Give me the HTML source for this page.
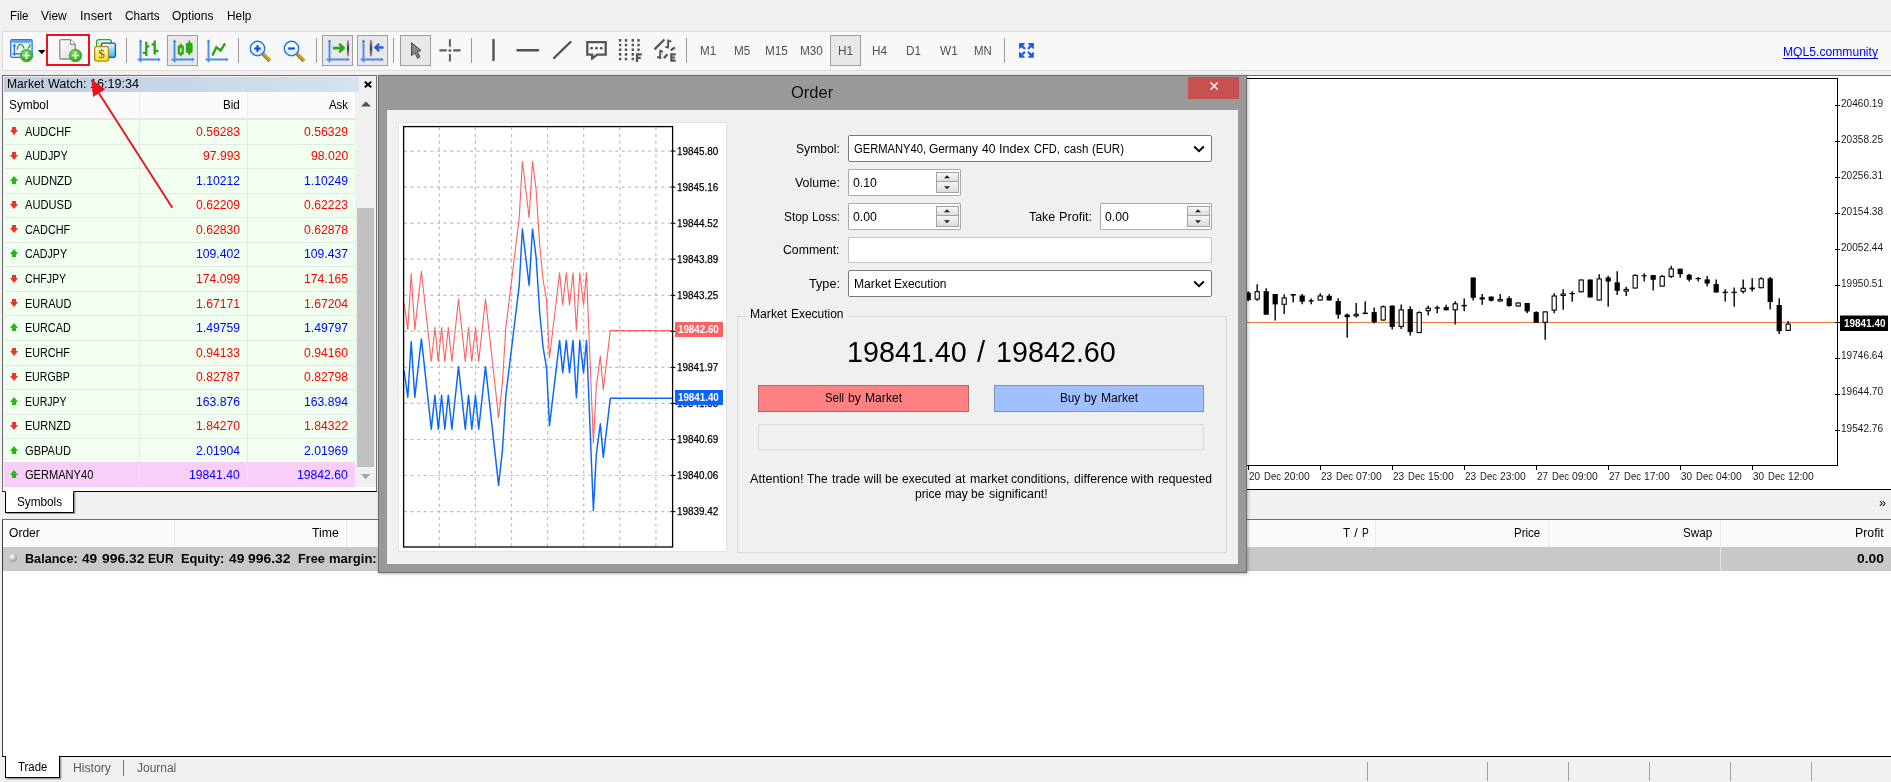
<!DOCTYPE html><html><head><meta charset="utf-8"><title>Order</title><style>
html,body{margin:0;padding:0}body{width:1891px;height:782px;overflow:hidden;position:relative;background:#f0f0f0;font-family:"Liberation Sans", sans-serif;font-size:12.5px;color:#000}
div{box-sizing:border-box}svg{position:absolute;overflow:visible}
</style></head><body><div id="root" style="position:absolute;left:0;top:0;width:1891px;height:782px;will-change:transform">
<div style="position:absolute;top:5.800000000000001px;line-height:20px;font-size:12.5px;color:#000;white-space:pre;transform-origin:0 50%;left:10.00px;transform:scaleX(0.9190);">File</div>
<div style="position:absolute;top:5.800000000000001px;line-height:20px;font-size:12.5px;color:#000;white-space:pre;transform-origin:0 50%;left:41.00px;transform:scaleX(0.9586);">View</div>
<div style="position:absolute;top:5.800000000000001px;line-height:20px;font-size:12.5px;color:#000;white-space:pre;transform-origin:0 50%;left:80.00px;transform:scaleX(1.0218);">Insert</div>
<div style="position:absolute;top:5.800000000000001px;line-height:20px;font-size:12.5px;color:#000;white-space:pre;transform-origin:0 50%;left:125.00px;transform:scaleX(0.9434);">Charts</div>
<div style="position:absolute;top:5.800000000000001px;line-height:20px;font-size:12.5px;color:#000;white-space:pre;transform-origin:0 50%;left:172.00px;transform:scaleX(0.9625);">Options</div>
<div style="position:absolute;top:5.800000000000001px;line-height:20px;font-size:12.5px;color:#000;white-space:pre;transform-origin:0 50%;left:227.00px;transform:scaleX(0.9487);">Help</div>
<div style="position:absolute;left:2px;top:31px;width:1889px;height:40px;background:#f8f8f8;border:1px solid #dcdcdc;border-right:none"></div>
<div style="position:absolute;left:126px;top:38.2px;width:1.2px;height:24.6px;background:#989898"></div>
<div style="position:absolute;left:238px;top:38.2px;width:1.2px;height:24.6px;background:#989898"></div>
<div style="position:absolute;left:316px;top:38.2px;width:1.2px;height:24.6px;background:#989898"></div>
<div style="position:absolute;left:393px;top:38.2px;width:1.2px;height:24.6px;background:#989898"></div>
<div style="position:absolute;left:471px;top:38.2px;width:1.2px;height:24.6px;background:#989898"></div>
<div style="position:absolute;left:686px;top:38.2px;width:1.2px;height:24.6px;background:#989898"></div>
<div style="position:absolute;left:1004px;top:38.2px;width:1.2px;height:24.6px;background:#989898"></div>
<div style="position:absolute;left:167px;top:35px;width:30.7px;height:30.7px;background:#e8e8e8;border:1.3px solid #9e9e9e"></div>
<div style="position:absolute;left:322px;top:35px;width:30.7px;height:30.7px;background:#e8e8e8;border:1.3px solid #9e9e9e"></div>
<div style="position:absolute;left:357px;top:35px;width:30.7px;height:30.7px;background:#e8e8e8;border:1.3px solid #9e9e9e"></div>
<div style="position:absolute;left:400px;top:35px;width:30.7px;height:30.7px;background:#e8e8e8;border:1.3px solid #9e9e9e"></div>
<div style="position:absolute;left:830px;top:35px;width:30.7px;height:30.7px;background:#e8e8e8;border:1.3px solid #9e9e9e"></div>
<div style="position:absolute;left:46px;top:34px;width:44px;height:32px;border:2px solid #e81224"></div>
<svg width="0" height="0" style="left:0;top:0"><defs><radialGradient id="gp" cx="0.4" cy="0.3" r="0.8"><stop offset="0" stop-color="#7ddc5a"/><stop offset="1" stop-color="#2c9a1c"/></radialGradient><linearGradient id="pg" x1="0" y1="0" x2="1" y2="1"><stop offset="0" stop-color="#ffffff"/><stop offset="1" stop-color="#dadada"/></linearGradient><linearGradient id="gold" x1="0" y1="0" x2="0" y2="1"><stop offset="0" stop-color="#fffbe8"/><stop offset="1" stop-color="#ffe01c"/></linearGradient><linearGradient id="tb" x1="0" y1="0" x2="0" y2="1"><stop offset="0" stop-color="#3f8ee8"/><stop offset="1" stop-color="#8ebaf2"/></linearGradient><linearGradient id="blu" x1="0" y1="0" x2="0" y2="1"><stop offset="0" stop-color="#eef8ff"/><stop offset="1" stop-color="#22c0ff"/></linearGradient><linearGradient id="grn" x1="0" y1="0" x2="0" y2="1"><stop offset="0" stop-color="#eefae4"/><stop offset="1" stop-color="#a4dc84"/></linearGradient><linearGradient id="lens" x1="0" y1="0" x2="0" y2="1"><stop offset="0" stop-color="#ffffff"/><stop offset="1" stop-color="#d8eefa"/></linearGradient><linearGradient id="bar" gradientUnits="userSpaceOnUse" x1="0" y1="4" x2="0" y2="18.5"><stop offset="0" stop-color="#9a9a9a"/><stop offset="0.5" stop-color="#3c3c3c"/><stop offset="1" stop-color="#9a9a9a"/></linearGradient></defs></svg>
<svg style="left:9px;top:38px" width="30" height="28" viewBox="0 0 30 28"><rect x="1.7" y="1.6" width="21.4" height="17.7" rx="1.4" fill="#e9f1fb" stroke="#237be2" stroke-width="1.3"/><rect x="2.3" y="2.2" width="20.2" height="2.9" fill="url(#tb)"/><path d="M5.4 7V17.7M3.4 15.8H12" stroke="#3866d2" stroke-width="1.3" fill="none"/><path d="M3.6 8.2L5.4 5.8L7.2 8.2Z" fill="#3866d2"/><path d="M8.2 11.6C8.8 8 10 6.4 11.6 6.4S14.2 8 14.8 10.4M19.2 10.4C20.2 9.4 20.8 8 21.3 6.3" stroke="#3aa31f" stroke-width="1.4" fill="none"/><circle cx="17.5" cy="17.5" r="6.3" fill="url(#gp)" stroke="#2f9a1f" stroke-width="0.6"/><path d="M13.9 17.5H21.1M17.5 13.9V21.1" stroke="#fff" stroke-width="1.7" fill="none"/></svg>
<svg style="left:38px;top:50px" width="8" height="4.4" viewBox="0 0 8 4.4"><path d="M0 0H7.6L3.8 4.2Z" fill="#000"/></svg>
<svg style="left:58px;top:38px" width="26" height="28" viewBox="0 0 26 28"><path d="M2.8 1.7H12.5L17.2 6.4V20Q17.2 21 16.2 21H2.8Q1.8 21 1.8 20V2.7Q1.8 1.7 2.8 1.7Z" fill="url(#pg)" stroke="#8c8c8c" stroke-width="1.3"/><path d="M12.5 1.7V6.4H17.2" fill="#fff" stroke="#8c8c8c" stroke-width="1.1"/><circle cx="17.5" cy="17.5" r="6.3" fill="url(#gp)" stroke="#2f9a1f" stroke-width="0.6"/><path d="M13.9 17.5H21.1M17.5 13.9V21.1" stroke="#fff" stroke-width="1.7" fill="none"/></svg>
<svg style="left:93px;top:38px" width="26" height="26" viewBox="0 0 26 26"><rect x="3.6" y="1.6" width="14.8" height="14" rx="2.2" fill="url(#grn)" stroke="#27ae1c" stroke-width="1.3"/><rect x="8.4" y="5.1" width="14" height="14.2" rx="2" fill="url(#blu)" stroke="#1448c0" stroke-width="1.3"/><rect x="1.7" y="8.7" width="13.8" height="14.4" rx="1.8" fill="url(#gold)" stroke="#b08a14" stroke-width="1.3"/><text x="8.6" y="20.4" font-size="13.5" text-anchor="middle" fill="#7a5a00" font-family='"Liberation Serif"'>$</text></svg>
<svg style="left:136.9px;top:36.5px" width="26" height="26" viewBox="0 0 26 26"><path d="M3.5 3.5V25.2M0.6 22.5H22" stroke="#4a8bee" stroke-width="1.9" fill="none"/><path d="M1.8 5L3.5 2.6L5.2 5ZM21.2 20.8L23.6 22.5L21.2 24.2Z" fill="#3b7ce8"/><path d="M9.3 4.8V19.1M5.8 15.9H9.3M9.3 9.3H12.4M17.7 3.6V17.6M14.6 7.4H17.7M17.7 14H21.4" stroke="#2aa612" stroke-width="2.3" fill="none"/></svg>
<svg style="left:170.9px;top:36.5px" width="26" height="26" viewBox="0 0 26 26"><path d="M3.5 3.5V25.2M0.6 22.5H22" stroke="#4a8bee" stroke-width="1.9" fill="none"/><path d="M1.8 5L3.5 2.6L5.2 5ZM21.2 20.8L23.6 22.5L21.2 24.2Z" fill="#3b7ce8"/><path d="M9.8 6.8V19.3M18.3 3.5V18" stroke="#2aa612" stroke-width="1.9"/><rect x="6.7" y="8.6" width="6.1" height="9" rx="0.8" fill="#2aa612"/><rect x="8.9" y="10.8" width="1.7" height="4.6" fill="#cfe8c8"/><rect x="14.9" y="5.7" width="6.7" height="10.2" rx="1.6" fill="#2aa612"/></svg>
<svg style="left:205.4px;top:36.5px" width="26" height="26" viewBox="0 0 26 26"><path d="M3.5 3.5V25.2M0.6 22.5H22" stroke="#4a8bee" stroke-width="1.9" fill="none"/><path d="M1.8 5L3.5 2.6L5.2 5ZM21.2 20.8L23.6 22.5L21.2 24.2Z" fill="#3b7ce8"/><path d="M7.3 18.5L11.4 10.3L15.7 13.5L20.1 6.3" stroke="#2aa612" stroke-width="2.5" fill="none"/></svg>
<svg style="left:249.3px;top:39.5px" width="24" height="24" viewBox="0 0 24 24"><path d="M13 13L20.9 20.9" stroke="#a87a10" stroke-width="3.8"/><path d="M13.4 12.6L21.3 20.5" stroke="#d8b030" stroke-width="1.5"/><circle cx="8.5" cy="8.5" r="7.2" fill="url(#lens)" stroke="#1c78e2" stroke-width="1.4"/><path d="M5.2 8.5H11.8" stroke="#1648d8" stroke-width="2.2"/><path d="M8.5 5.2V11.8" stroke="#1648d8" stroke-width="2.2"/></svg>
<svg style="left:283.2px;top:39.5px" width="24" height="24" viewBox="0 0 24 24"><path d="M13 13L20.9 20.9" stroke="#a87a10" stroke-width="3.8"/><path d="M13.4 12.6L21.3 20.5" stroke="#d8b030" stroke-width="1.5"/><circle cx="8.5" cy="8.5" r="7.2" fill="url(#lens)" stroke="#1c78e2" stroke-width="1.4"/><path d="M5.2 8.5H11.8" stroke="#1648d8" stroke-width="2.2"/></svg>
<svg style="left:326px;top:36.5px" width="26" height="26" viewBox="0 0 26 26"><path d="M3.5 3.5V25.2M0.6 22.5H22" stroke="#4a8bee" stroke-width="1.9" fill="none"/><path d="M1.8 5L3.5 2.6L5.2 5ZM21.2 20.8L23.6 22.5L21.2 24.2Z" fill="#3b7ce8"/><path d="M6.8 11.1H17M13.2 6.9L17.6 11.1L13.2 15.3" stroke="#28a814" stroke-width="2.6" fill="none" stroke-linejoin="miter"/><path d="M22 4V18.3" stroke="url(#bar)" stroke-width="2.2" stroke-linecap="round"/></svg>
<svg style="left:360.4px;top:36.5px" width="26" height="26" viewBox="0 0 26 26"><path d="M3.5 3.5V25.2M0.6 22.5H22" stroke="#4a8bee" stroke-width="1.9" fill="none"/><path d="M1.8 5L3.5 2.6L5.2 5ZM21.2 20.8L23.6 22.5L21.2 24.2Z" fill="#3b7ce8"/><path d="M11 4V18.3" stroke="url(#bar)" stroke-width="2.5" stroke-linecap="round"/><path d="M23.5 10.5H16M19.2 6.8L15.4 10.5L19.2 14.2" stroke="#2458e8" stroke-width="2.3" fill="none"/></svg>
<svg style="left:410px;top:41px" width="14" height="19" viewBox="0 0 14 19"><path d="M1.5 1.6L11 9.5L7.4 10.5L9.9 16L7.5 17.3L5 12L1.5 14.6Z" fill="#858585" stroke="#3c3c3c" stroke-width="0.9" stroke-linejoin="miter"/></svg>
<svg style="left:439px;top:39px" width="22" height="23" viewBox="0 0 22 23"><path d="M10.9 0.2V7.7M10.9 15.1V22.6" stroke="#5c5c5c" stroke-width="2" fill="none"/><path d="M1.3 11.4H6.9M15 11.4H20.6" stroke="#5c5c5c" stroke-width="2.3" stroke-linecap="round" fill="none"/><circle cx="10.9" cy="11.4" r="1.5" fill="#666"/></svg>
<svg style="left:490px;top:38px" width="6" height="24" viewBox="0 0 6 24"><path d="M3.5 2V22" stroke="#505050" stroke-width="2.4" stroke-linecap="round"/></svg>
<svg style="left:515px;top:44px" width="26" height="12" viewBox="0 0 26 12"><path d="M2.5 6.3H23" stroke="#505050" stroke-width="2.4" stroke-linecap="round"/></svg>
<svg style="left:551px;top:39px" width="22" height="22" viewBox="0 0 22 22"><path d="M3 19L19.5 3" stroke="#505050" stroke-width="2.4" stroke-linecap="round"/></svg>
<svg style="left:585px;top:40px" width="24" height="22" viewBox="0 0 24 22"><path d="M2.3 2.2H20.7V14.6H12.2L7.2 18.4V14.6H2.3Z" fill="none" stroke="#555" stroke-width="2.3" stroke-linejoin="miter"/><circle cx="6.6" cy="8.2" r="1.35" fill="#555"/><circle cx="11.5" cy="8.2" r="1.35" fill="#555"/><circle cx="16.3" cy="8.2" r="1.35" fill="#555"/></svg>
<svg style="left:618px;top:38px" width="26" height="25" viewBox="0 0 26 25"><path d="M2.1 1.1V22.4M8 1.1V22.4M14.8 1.1V22.4" stroke="#555" stroke-width="2.4" stroke-dasharray="2.6 2.05"/><path d="M20.5 1.1V13" stroke="#555" stroke-width="2.4" stroke-dasharray="2.6 2.05"/><rect x="16.2" y="14.6" width="9" height="10" fill="#f8f8f8"/><path d="M19 24V16.3H23.8M19 19.9H22.8" stroke="#555" stroke-width="2.3" fill="none"/></svg>
<svg style="left:653px;top:38px" width="26" height="25" viewBox="0 0 26 25"><g stroke="#555" fill="none"><path d="M1.5 11.4L11.4 1.5M17.7 12.3L21.8 9.5M10.8 20.1L14.5 16.4" stroke-width="2.2"/><path d="M15.1 1.5V10.5M15.1 3.3H18.3M12.2 9.1H15.1M7.2 11.7V21M7.2 13.5H10M4 19.3H7.2" stroke-width="1.9"/><path d="M22.7 16.3H18.3V22.7H22.7M18.3 19.5H22" stroke-width="2.2"/></g></svg>
<div style="position:absolute;top:40.8px;line-height:20px;font-size:12.5px;color:#505050;white-space:pre;transform-origin:0 50%;left:700.40px;transform:scaleX(0.9328);">M1</div>
<div style="position:absolute;top:40.8px;line-height:20px;font-size:12.5px;color:#505050;white-space:pre;transform-origin:0 50%;left:733.90px;transform:scaleX(0.9328);">M5</div>
<div style="position:absolute;top:40.8px;line-height:20px;font-size:12.5px;color:#505050;white-space:pre;transform-origin:0 50%;left:765.04px;transform:scaleX(0.9423);">M15</div>
<div style="position:absolute;top:40.8px;line-height:20px;font-size:12.5px;color:#505050;white-space:pre;transform-origin:0 50%;left:799.54px;transform:scaleX(0.9423);">M30</div>
<div style="position:absolute;top:40.8px;line-height:20px;font-size:12.5px;color:#505050;white-space:pre;transform-origin:0 50%;left:837.99px;transform:scaleX(0.9398);">H1</div>
<div style="position:absolute;top:40.8px;line-height:20px;font-size:12.5px;color:#505050;white-space:pre;transform-origin:0 50%;left:872.49px;transform:scaleX(0.9398);">H4</div>
<div style="position:absolute;top:40.8px;line-height:20px;font-size:12.5px;color:#505050;white-space:pre;transform-origin:0 50%;left:906.47px;transform:scaleX(0.9422);">D1</div>
<div style="position:absolute;top:40.8px;line-height:20px;font-size:12.5px;color:#505050;white-space:pre;transform-origin:0 50%;left:940.09px;transform:scaleX(0.9499);">W1</div>
<div style="position:absolute;top:40.8px;line-height:20px;font-size:12.5px;color:#505050;white-space:pre;transform-origin:0 50%;left:974.16px;transform:scaleX(0.9098);">MN</div>
<svg style="left:1019px;top:43px" width="15" height="15" viewBox="0 0 15 15"><g fill="#1f5ee6" stroke="#1f5ee6" stroke-width="0"><g><path d="M0 0.8Q0 0 0.8 0H5.4Q6.3 0.6 5.4 1.4L1.4 5.4Q0.6 6.3 0 5.4Z"/><path d="M2.5 2.5L5.3 5.3" stroke-width="2.3" stroke-linecap="round"/></g><g transform="translate(14.9,0) scale(-1,1)"><path d="M0 0.8Q0 0 0.8 0H5.4Q6.3 0.6 5.4 1.4L1.4 5.4Q0.6 6.3 0 5.4Z"/><path d="M2.5 2.5L5.3 5.3" stroke-width="2.3" stroke-linecap="round"/></g><g transform="translate(0,14.8) scale(1,-1)"><path d="M0 0.8Q0 0 0.8 0H5.4Q6.3 0.6 5.4 1.4L1.4 5.4Q0.6 6.3 0 5.4Z"/><path d="M2.5 2.5L5.3 5.3" stroke-width="2.3" stroke-linecap="round"/></g><g transform="translate(14.9,14.8) scale(-1,-1)"><path d="M0 0.8Q0 0 0.8 0H5.4Q6.3 0.6 5.4 1.4L1.4 5.4Q0.6 6.3 0 5.4Z"/><path d="M2.5 2.5L5.3 5.3" stroke-width="2.3" stroke-linecap="round"/></g></g></svg>
<div style="position:absolute;top:41.8px;line-height:20px;font-size:12.5px;color:#0000ee;white-space:pre;transform-origin:0 50%;left:1783.00px;transform:scaleX(0.9699);">MQL5.community</div>
<div style="position:absolute;left:1783px;top:58.2px;width:95px;height:1px;background:#0000ee"></div>
<div style="position:absolute;left:2px;top:75px;width:375px;height:417px;border:1px solid #707070;border-bottom:1.2px solid #000;background:#f0f0f0"></div>
<div style="position:absolute;left:4px;top:77px;width:355px;height:15px;background:linear-gradient(90deg,#bdcbdd,#d5e2f2)"></div>
<div style="position:absolute;top:73.8px;line-height:20px;font-size:12.5px;color:#000;white-space:pre;transform-origin:0 50%;left:7.00px;transform:scaleX(0.9704);">Market</div>
<div style="position:absolute;top:73.8px;line-height:20px;font-size:12.5px;color:#000;white-space:pre;transform-origin:0 50%;left:47.92px;transform:scaleX(1.0030);">Watch:</div>
<div style="position:absolute;top:73.8px;line-height:20px;font-size:12.5px;color:#000;white-space:pre;transform-origin:0 50%;left:90.32px;transform:scaleX(1.0071);">16:19:34</div>
<svg style="left:364.2px;top:80.8px" width="8" height="7" viewBox="0 0 8 7"><path d="M0.8 0.8L7.2 6.2M7.2 0.8L0.8 6.2" stroke="#000" stroke-width="2"/></svg>
<div style="position:absolute;left:4px;top:92px;width:351px;height:26.5px;background:#fafafa"></div>
<div style="position:absolute;left:4px;top:118.2px;width:351px;height:1.5px;background:#e6e6e6"></div>
<div style="position:absolute;left:139px;top:92px;width:1px;height:26px;background:#ececec"></div>
<div style="position:absolute;left:247px;top:92px;width:1px;height:26px;background:#ececec"></div>
<div style="position:absolute;top:95.0px;line-height:20px;font-size:12.5px;color:#000;white-space:pre;transform-origin:0 50%;left:9.00px;transform:scaleX(0.9502);">Symbol</div>
<div style="position:absolute;top:95.0px;line-height:20px;font-size:12.5px;color:#000;white-space:pre;transform-origin:0 50%;left:223.14px;transform:scaleX(0.9334);">Bid</div>
<div style="position:absolute;top:95.0px;line-height:20px;font-size:12.5px;color:#000;white-space:pre;transform-origin:0 50%;left:329.01px;transform:scaleX(0.9114);">Ask</div>
<div style="position:absolute;left:4px;top:119.7px;width:351px;height:24.52px;background:#f0fff0"></div>
<div style="position:absolute;top:121.86000000000001px;line-height:20px;font-size:12.5px;color:#000;white-space:pre;transform-origin:0 50%;left:25.00px;transform:scaleX(0.8811);">AUDCHF</div>
<div style="position:absolute;top:121.86000000000001px;line-height:20px;font-size:12.5px;color:#ff0000;white-space:pre;transform-origin:0 50%;left:195.98px;transform:scaleX(0.9742);">0.56283</div>
<div style="position:absolute;top:121.86000000000001px;line-height:20px;font-size:12.5px;color:#ff0000;white-space:pre;transform-origin:0 50%;left:303.98px;transform:scaleX(0.9742);">0.56329</div>
<svg style="left:9.9px;top:127.41px" width="8.2" height="8.2" viewBox="0 0 8.2 8.2"><path d="M4.05 8.1L8.1 3.1H6.1V0H2V3.1H0Z" fill="#e83636"/></svg>
<div style="position:absolute;left:4px;top:144.22px;width:351px;height:24.52px;background:#f0fff0"></div>
<div style="position:absolute;top:146.38px;line-height:20px;font-size:12.5px;color:#000;white-space:pre;transform-origin:0 50%;left:25.00px;transform:scaleX(0.8674);">AUDJPY</div>
<div style="position:absolute;top:146.38px;line-height:20px;font-size:12.5px;color:#ff0000;white-space:pre;transform-origin:0 50%;left:202.69px;transform:scaleX(0.9757);">97.993</div>
<div style="position:absolute;top:146.38px;line-height:20px;font-size:12.5px;color:#ff0000;white-space:pre;transform-origin:0 50%;left:310.69px;transform:scaleX(0.9757);">98.020</div>
<svg style="left:9.9px;top:151.93px" width="8.2" height="8.2" viewBox="0 0 8.2 8.2"><path d="M4.05 8.1L8.1 3.1H6.1V0H2V3.1H0Z" fill="#e83636"/></svg>
<div style="position:absolute;left:4px;top:168.74px;width:351px;height:24.52px;background:#f0fff0"></div>
<div style="position:absolute;top:170.9px;line-height:20px;font-size:12.5px;color:#000;white-space:pre;transform-origin:0 50%;left:25.00px;transform:scaleX(0.9064);">AUDNZD</div>
<div style="position:absolute;top:170.9px;line-height:20px;font-size:12.5px;color:#0000ff;white-space:pre;transform-origin:0 50%;left:195.98px;transform:scaleX(0.9742);">1.10212</div>
<div style="position:absolute;top:170.9px;line-height:20px;font-size:12.5px;color:#0000ff;white-space:pre;transform-origin:0 50%;left:303.98px;transform:scaleX(0.9742);">1.10249</div>
<svg style="left:9.9px;top:175.85px" width="8.2" height="8.2" viewBox="0 0 8.2 8.2"><path d="M4.05 0L8.1 5H6.1V8.1H2V5H0Z" fill="#2cb418"/></svg>
<div style="position:absolute;left:4px;top:193.26px;width:351px;height:24.52px;background:#f0fff0"></div>
<div style="position:absolute;top:195.42px;line-height:20px;font-size:12.5px;color:#000;white-space:pre;transform-origin:0 50%;left:25.00px;transform:scaleX(0.8913);">AUDUSD</div>
<div style="position:absolute;top:195.42px;line-height:20px;font-size:12.5px;color:#ff0000;white-space:pre;transform-origin:0 50%;left:195.98px;transform:scaleX(0.9742);">0.62209</div>
<div style="position:absolute;top:195.42px;line-height:20px;font-size:12.5px;color:#ff0000;white-space:pre;transform-origin:0 50%;left:303.98px;transform:scaleX(0.9742);">0.62223</div>
<svg style="left:9.9px;top:200.97px" width="8.2" height="8.2" viewBox="0 0 8.2 8.2"><path d="M4.05 8.1L8.1 3.1H6.1V0H2V3.1H0Z" fill="#e83636"/></svg>
<div style="position:absolute;left:4px;top:217.78px;width:351px;height:24.52px;background:#f0fff0"></div>
<div style="position:absolute;top:219.94px;line-height:20px;font-size:12.5px;color:#000;white-space:pre;transform-origin:0 50%;left:25.00px;transform:scaleX(0.8681);">CADCHF</div>
<div style="position:absolute;top:219.94px;line-height:20px;font-size:12.5px;color:#ff0000;white-space:pre;transform-origin:0 50%;left:195.98px;transform:scaleX(0.9742);">0.62830</div>
<div style="position:absolute;top:219.94px;line-height:20px;font-size:12.5px;color:#ff0000;white-space:pre;transform-origin:0 50%;left:303.98px;transform:scaleX(0.9742);">0.62878</div>
<svg style="left:9.9px;top:225.49px" width="8.2" height="8.2" viewBox="0 0 8.2 8.2"><path d="M4.05 8.1L8.1 3.1H6.1V0H2V3.1H0Z" fill="#e83636"/></svg>
<div style="position:absolute;left:4px;top:242.3px;width:351px;height:24.52px;background:#f0fff0"></div>
<div style="position:absolute;top:244.46px;line-height:20px;font-size:12.5px;color:#000;white-space:pre;transform-origin:0 50%;left:25.00px;transform:scaleX(0.8537);">CADJPY</div>
<div style="position:absolute;top:244.46px;line-height:20px;font-size:12.5px;color:#0000ff;white-space:pre;transform-origin:0 50%;left:195.98px;transform:scaleX(0.9742);">109.402</div>
<div style="position:absolute;top:244.46px;line-height:20px;font-size:12.5px;color:#0000ff;white-space:pre;transform-origin:0 50%;left:303.98px;transform:scaleX(0.9742);">109.437</div>
<svg style="left:9.9px;top:249.41px" width="8.2" height="8.2" viewBox="0 0 8.2 8.2"><path d="M4.05 0L8.1 5H6.1V8.1H2V5H0Z" fill="#2cb418"/></svg>
<div style="position:absolute;left:4px;top:266.82px;width:351px;height:24.52px;background:#f0fff0"></div>
<div style="position:absolute;top:268.97999999999996px;line-height:20px;font-size:12.5px;color:#000;white-space:pre;transform-origin:0 50%;left:25.00px;transform:scaleX(0.8453);">CHFJPY</div>
<div style="position:absolute;top:268.97999999999996px;line-height:20px;font-size:12.5px;color:#ff0000;white-space:pre;transform-origin:0 50%;left:195.98px;transform:scaleX(0.9742);">174.099</div>
<div style="position:absolute;top:268.97999999999996px;line-height:20px;font-size:12.5px;color:#ff0000;white-space:pre;transform-origin:0 50%;left:303.98px;transform:scaleX(0.9742);">174.165</div>
<svg style="left:9.9px;top:274.53px" width="8.2" height="8.2" viewBox="0 0 8.2 8.2"><path d="M4.05 8.1L8.1 3.1H6.1V0H2V3.1H0Z" fill="#e83636"/></svg>
<div style="position:absolute;left:4px;top:291.34px;width:351px;height:24.52px;background:#f0fff0"></div>
<div style="position:absolute;top:293.49999999999994px;line-height:20px;font-size:12.5px;color:#000;white-space:pre;transform-origin:0 50%;left:25.00px;transform:scaleX(0.8790);">EURAUD</div>
<div style="position:absolute;top:293.49999999999994px;line-height:20px;font-size:12.5px;color:#ff0000;white-space:pre;transform-origin:0 50%;left:195.98px;transform:scaleX(0.9742);">1.67171</div>
<div style="position:absolute;top:293.49999999999994px;line-height:20px;font-size:12.5px;color:#ff0000;white-space:pre;transform-origin:0 50%;left:303.98px;transform:scaleX(0.9742);">1.67204</div>
<svg style="left:9.9px;top:299.05px" width="8.2" height="8.2" viewBox="0 0 8.2 8.2"><path d="M4.05 8.1L8.1 3.1H6.1V0H2V3.1H0Z" fill="#e83636"/></svg>
<div style="position:absolute;left:4px;top:315.86px;width:351px;height:24.52px;background:#f0fff0"></div>
<div style="position:absolute;top:318.02px;line-height:20px;font-size:12.5px;color:#000;white-space:pre;transform-origin:0 50%;left:25.00px;transform:scaleX(0.8661);">EURCAD</div>
<div style="position:absolute;top:318.02px;line-height:20px;font-size:12.5px;color:#0000ff;white-space:pre;transform-origin:0 50%;left:195.98px;transform:scaleX(0.9742);">1.49759</div>
<div style="position:absolute;top:318.02px;line-height:20px;font-size:12.5px;color:#0000ff;white-space:pre;transform-origin:0 50%;left:303.98px;transform:scaleX(0.9742);">1.49797</div>
<svg style="left:9.9px;top:322.97px" width="8.2" height="8.2" viewBox="0 0 8.2 8.2"><path d="M4.05 0L8.1 5H6.1V8.1H2V5H0Z" fill="#2cb418"/></svg>
<div style="position:absolute;left:4px;top:340.38px;width:351px;height:24.52px;background:#f0fff0"></div>
<div style="position:absolute;top:342.53999999999996px;line-height:20px;font-size:12.5px;color:#000;white-space:pre;transform-origin:0 50%;left:25.00px;transform:scaleX(0.8584);">EURCHF</div>
<div style="position:absolute;top:342.53999999999996px;line-height:20px;font-size:12.5px;color:#ff0000;white-space:pre;transform-origin:0 50%;left:195.98px;transform:scaleX(0.9742);">0.94133</div>
<div style="position:absolute;top:342.53999999999996px;line-height:20px;font-size:12.5px;color:#ff0000;white-space:pre;transform-origin:0 50%;left:303.98px;transform:scaleX(0.9742);">0.94160</div>
<svg style="left:9.9px;top:348.09px" width="8.2" height="8.2" viewBox="0 0 8.2 8.2"><path d="M4.05 8.1L8.1 3.1H6.1V0H2V3.1H0Z" fill="#e83636"/></svg>
<div style="position:absolute;left:4px;top:364.9px;width:351px;height:24.52px;background:#f0fff0"></div>
<div style="position:absolute;top:367.05999999999995px;line-height:20px;font-size:12.5px;color:#000;white-space:pre;transform-origin:0 50%;left:25.00px;transform:scaleX(0.8493);">EURGBP</div>
<div style="position:absolute;top:367.05999999999995px;line-height:20px;font-size:12.5px;color:#ff0000;white-space:pre;transform-origin:0 50%;left:195.98px;transform:scaleX(0.9742);">0.82787</div>
<div style="position:absolute;top:367.05999999999995px;line-height:20px;font-size:12.5px;color:#ff0000;white-space:pre;transform-origin:0 50%;left:303.98px;transform:scaleX(0.9742);">0.82798</div>
<svg style="left:9.9px;top:372.61px" width="8.2" height="8.2" viewBox="0 0 8.2 8.2"><path d="M4.05 8.1L8.1 3.1H6.1V0H2V3.1H0Z" fill="#e83636"/></svg>
<div style="position:absolute;left:4px;top:389.42px;width:351px;height:24.52px;background:#f0fff0"></div>
<div style="position:absolute;top:391.5799999999999px;line-height:20px;font-size:12.5px;color:#000;white-space:pre;transform-origin:0 50%;left:25.00px;transform:scaleX(0.8435);">EURJPY</div>
<div style="position:absolute;top:391.5799999999999px;line-height:20px;font-size:12.5px;color:#0000ff;white-space:pre;transform-origin:0 50%;left:195.98px;transform:scaleX(0.9742);">163.876</div>
<div style="position:absolute;top:391.5799999999999px;line-height:20px;font-size:12.5px;color:#0000ff;white-space:pre;transform-origin:0 50%;left:303.98px;transform:scaleX(0.9742);">163.894</div>
<svg style="left:9.9px;top:396.53px" width="8.2" height="8.2" viewBox="0 0 8.2 8.2"><path d="M4.05 0L8.1 5H6.1V8.1H2V5H0Z" fill="#2cb418"/></svg>
<div style="position:absolute;left:4px;top:413.94px;width:351px;height:24.52px;background:#f0fff0"></div>
<div style="position:absolute;top:416.09999999999997px;line-height:20px;font-size:12.5px;color:#000;white-space:pre;transform-origin:0 50%;left:25.00px;transform:scaleX(0.8837);">EURNZD</div>
<div style="position:absolute;top:416.09999999999997px;line-height:20px;font-size:12.5px;color:#ff0000;white-space:pre;transform-origin:0 50%;left:195.98px;transform:scaleX(0.9742);">1.84270</div>
<div style="position:absolute;top:416.09999999999997px;line-height:20px;font-size:12.5px;color:#ff0000;white-space:pre;transform-origin:0 50%;left:303.98px;transform:scaleX(0.9742);">1.84322</div>
<svg style="left:9.9px;top:421.65px" width="8.2" height="8.2" viewBox="0 0 8.2 8.2"><path d="M4.05 8.1L8.1 3.1H6.1V0H2V3.1H0Z" fill="#e83636"/></svg>
<div style="position:absolute;left:4px;top:438.46px;width:351px;height:24.52px;background:#f0fff0"></div>
<div style="position:absolute;top:440.61999999999995px;line-height:20px;font-size:12.5px;color:#000;white-space:pre;transform-origin:0 50%;left:25.00px;transform:scaleX(0.8872);">GBPAUD</div>
<div style="position:absolute;top:440.61999999999995px;line-height:20px;font-size:12.5px;color:#0000ff;white-space:pre;transform-origin:0 50%;left:195.98px;transform:scaleX(0.9742);">2.01904</div>
<div style="position:absolute;top:440.61999999999995px;line-height:20px;font-size:12.5px;color:#0000ff;white-space:pre;transform-origin:0 50%;left:303.98px;transform:scaleX(0.9742);">2.01969</div>
<svg style="left:9.9px;top:445.57px" width="8.2" height="8.2" viewBox="0 0 8.2 8.2"><path d="M4.05 0L8.1 5H6.1V8.1H2V5H0Z" fill="#2cb418"/></svg>
<div style="position:absolute;left:4px;top:462.08px;width:351px;height:25.419999999999998px;background:#f9cef9"></div>
<div style="position:absolute;top:465.13999999999993px;line-height:20px;font-size:12.5px;color:#000;white-space:pre;transform-origin:0 50%;left:25.00px;transform:scaleX(0.8861);">GERMANY40</div>
<div style="position:absolute;top:465.13999999999993px;line-height:20px;font-size:12.5px;color:#0000ff;white-space:pre;transform-origin:0 50%;left:189.26px;transform:scaleX(0.9731);">19841.40</div>
<div style="position:absolute;top:465.13999999999993px;line-height:20px;font-size:12.5px;color:#0000ff;white-space:pre;transform-origin:0 50%;left:297.26px;transform:scaleX(0.9731);">19842.60</div>
<svg style="left:9.9px;top:470.09px" width="8.2" height="8.2" viewBox="0 0 8.2 8.2"><path d="M4.05 0L8.1 5H6.1V8.1H2V5H0Z" fill="#2cb418"/></svg>
<div style="position:absolute;left:4px;top:143.82px;width:351px;height:1px;background:#e3e9e3"></div>
<div style="position:absolute;left:4px;top:168.34px;width:351px;height:1px;background:#e3e9e3"></div>
<div style="position:absolute;left:4px;top:192.86px;width:351px;height:1px;background:#e3e9e3"></div>
<div style="position:absolute;left:4px;top:217.38px;width:351px;height:1px;background:#e3e9e3"></div>
<div style="position:absolute;left:4px;top:241.9px;width:351px;height:1px;background:#e3e9e3"></div>
<div style="position:absolute;left:4px;top:266.42px;width:351px;height:1px;background:#e3e9e3"></div>
<div style="position:absolute;left:4px;top:290.94px;width:351px;height:1px;background:#e3e9e3"></div>
<div style="position:absolute;left:4px;top:315.46px;width:351px;height:1px;background:#e3e9e3"></div>
<div style="position:absolute;left:4px;top:339.98px;width:351px;height:1px;background:#e3e9e3"></div>
<div style="position:absolute;left:4px;top:364.5px;width:351px;height:1px;background:#e3e9e3"></div>
<div style="position:absolute;left:4px;top:389.02px;width:351px;height:1px;background:#e3e9e3"></div>
<div style="position:absolute;left:4px;top:413.54px;width:351px;height:1px;background:#e3e9e3"></div>
<div style="position:absolute;left:4px;top:438.06px;width:351px;height:1px;background:#e3e9e3"></div>
<div style="position:absolute;left:139.1px;top:119.7px;width:1px;height:367.3px;background:#e7e7e7"></div>
<div style="position:absolute;left:247.1px;top:119.7px;width:1px;height:367.3px;background:#e7e7e7"></div>
<svg style="left:361px;top:101px" width="10" height="6" viewBox="0 0 10 6"><path d="M0 5.5L5 0.5L10 5.5Z" fill="#505050"/></svg>
<svg style="left:360.8px;top:474px" width="9.4" height="5.4" viewBox="0 0 9.4 5.4"><path d="M0 0L4.7 5.2L9.4 0Z" fill="#a3a3a3"/></svg>
<div style="position:absolute;left:357.1px;top:208.1px;width:16.7px;height:258.6px;background:#c1c1c1"></div>
<div style="position:absolute;left:3px;top:487.4px;width:373px;height:3.6px;background:#fff"></div>
<div style="position:absolute;left:5px;top:491px;width:69px;height:22.3px;background:#fff;border:1px solid #000;border-top:1px solid #fff;box-shadow:1.5px 1px 0 #a0a0a0"></div>
<div style="position:absolute;top:492.0px;line-height:20px;font-size:12.5px;color:#000;white-space:pre;transform-origin:0 50%;left:17.00px;transform:scaleX(0.9407);">Symbols</div>
<div style="position:absolute;left:1247px;top:75px;width:644px;height:415px;background:#fff;border-top:1px solid #707070"></div>
<div style="position:absolute;left:1247px;top:489px;width:644px;height:1px;background:#000"></div>
<div style="position:absolute;left:1247px;top:78px;width:591px;height:1.3px;background:#000"></div>
<div style="position:absolute;left:1836.6px;top:78px;width:1.4px;height:388px;background:#000"></div>
<div style="position:absolute;left:1247px;top:464.7px;width:591px;height:1.3px;background:#000"></div>
<div style="position:absolute;left:1247px;top:321.6px;width:590px;height:1.5px;background:#f07a3c"></div>
<div style="position:absolute;left:1835.2px;top:105.1px;width:4.6px;height:1px;background:#000"></div>
<div style="position:absolute;top:93.89999999999999px;line-height:20px;font-size:10.2px;color:#1a1a1a;white-space:pre;transform-origin:0 50%;left:1841.00px;transform:scaleX(0.9890);">20460.19</div>
<div style="position:absolute;left:1835.2px;top:141.17px;width:4.6px;height:1px;background:#000"></div>
<div style="position:absolute;top:129.97px;line-height:20px;font-size:10.2px;color:#1a1a1a;white-space:pre;transform-origin:0 50%;left:1841.00px;transform:scaleX(0.9890);">20358.25</div>
<div style="position:absolute;left:1835.2px;top:177.24px;width:4.6px;height:1px;background:#000"></div>
<div style="position:absolute;top:166.04000000000002px;line-height:20px;font-size:10.2px;color:#1a1a1a;white-space:pre;transform-origin:0 50%;left:1841.00px;transform:scaleX(0.9890);">20256.31</div>
<div style="position:absolute;left:1835.2px;top:213.31px;width:4.6px;height:1px;background:#000"></div>
<div style="position:absolute;top:202.11px;line-height:20px;font-size:10.2px;color:#1a1a1a;white-space:pre;transform-origin:0 50%;left:1841.00px;transform:scaleX(0.9890);">20154.38</div>
<div style="position:absolute;left:1835.2px;top:249.38px;width:4.6px;height:1px;background:#000"></div>
<div style="position:absolute;top:238.18px;line-height:20px;font-size:10.2px;color:#1a1a1a;white-space:pre;transform-origin:0 50%;left:1841.00px;transform:scaleX(0.9890);">20052.44</div>
<div style="position:absolute;left:1835.2px;top:285.45px;width:4.6px;height:1px;background:#000"></div>
<div style="position:absolute;top:274.25px;line-height:20px;font-size:10.2px;color:#1a1a1a;white-space:pre;transform-origin:0 50%;left:1841.00px;transform:scaleX(0.9890);">19950.51</div>
<div style="position:absolute;left:1835.2px;top:357.59px;width:4.6px;height:1px;background:#000"></div>
<div style="position:absolute;top:346.39000000000004px;line-height:20px;font-size:10.2px;color:#1a1a1a;white-space:pre;transform-origin:0 50%;left:1841.00px;transform:scaleX(0.9890);">19746.64</div>
<div style="position:absolute;left:1835.2px;top:393.66px;width:4.6px;height:1px;background:#000"></div>
<div style="position:absolute;top:382.46px;line-height:20px;font-size:10.2px;color:#1a1a1a;white-space:pre;transform-origin:0 50%;left:1841.00px;transform:scaleX(0.9890);">19644.70</div>
<div style="position:absolute;left:1835.2px;top:429.73px;width:4.6px;height:1px;background:#000"></div>
<div style="position:absolute;top:418.53000000000003px;line-height:20px;font-size:10.2px;color:#1a1a1a;white-space:pre;transform-origin:0 50%;left:1841.00px;transform:scaleX(0.9890);">19542.76</div>
<div style="position:absolute;left:1839.8px;top:315.4px;width:48.6px;height:15.5px;background:#000;border-top:1px solid #e86a2c"></div>
<div style="position:absolute;left:1835px;top:321.8px;width:5px;height:1px;background:#000"></div>
<div style="position:absolute;top:313.8px;line-height:20px;font-size:10.2px;color:#fff;white-space:pre;transform-origin:0 50%;font-weight:bold;left:1843.50px;transform:scaleX(0.9755);">19841.40</div>
<div style="position:absolute;left:1247.6px;top:465px;width:1.2px;height:4.5px;background:#000"></div>
<div style="position:absolute;top:466.8px;line-height:20px;font-size:10.2px;color:#1a1a1a;white-space:pre;transform-origin:0 50%;left:1249.20px;transform:scaleX(0.9817);">20</div>
<div style="position:absolute;top:466.8px;line-height:20px;font-size:10.2px;color:#1a1a1a;white-space:pre;transform-origin:0 50%;left:1263.53px;transform:scaleX(0.9363);">Dec</div>
<div style="position:absolute;top:466.8px;line-height:20px;font-size:10.2px;color:#1a1a1a;white-space:pre;transform-origin:0 50%;left:1283.71px;transform:scaleX(1.0142);">20:00</div>
<div style="position:absolute;left:1319.6px;top:465px;width:1.2px;height:4.5px;background:#000"></div>
<div style="position:absolute;top:466.8px;line-height:20px;font-size:10.2px;color:#1a1a1a;white-space:pre;transform-origin:0 50%;left:1321.20px;transform:scaleX(0.9817);">23</div>
<div style="position:absolute;top:466.8px;line-height:20px;font-size:10.2px;color:#1a1a1a;white-space:pre;transform-origin:0 50%;left:1335.53px;transform:scaleX(0.9363);">Dec</div>
<div style="position:absolute;top:466.8px;line-height:20px;font-size:10.2px;color:#1a1a1a;white-space:pre;transform-origin:0 50%;left:1355.71px;transform:scaleX(1.0142);">07:00</div>
<div style="position:absolute;left:1391.6px;top:465px;width:1.2px;height:4.5px;background:#000"></div>
<div style="position:absolute;top:466.8px;line-height:20px;font-size:10.2px;color:#1a1a1a;white-space:pre;transform-origin:0 50%;left:1393.20px;transform:scaleX(0.9817);">23</div>
<div style="position:absolute;top:466.8px;line-height:20px;font-size:10.2px;color:#1a1a1a;white-space:pre;transform-origin:0 50%;left:1407.53px;transform:scaleX(0.9363);">Dec</div>
<div style="position:absolute;top:466.8px;line-height:20px;font-size:10.2px;color:#1a1a1a;white-space:pre;transform-origin:0 50%;left:1427.71px;transform:scaleX(1.0142);">15:00</div>
<div style="position:absolute;left:1463.6px;top:465px;width:1.2px;height:4.5px;background:#000"></div>
<div style="position:absolute;top:466.8px;line-height:20px;font-size:10.2px;color:#1a1a1a;white-space:pre;transform-origin:0 50%;left:1465.20px;transform:scaleX(0.9817);">23</div>
<div style="position:absolute;top:466.8px;line-height:20px;font-size:10.2px;color:#1a1a1a;white-space:pre;transform-origin:0 50%;left:1479.53px;transform:scaleX(0.9363);">Dec</div>
<div style="position:absolute;top:466.8px;line-height:20px;font-size:10.2px;color:#1a1a1a;white-space:pre;transform-origin:0 50%;left:1499.71px;transform:scaleX(1.0142);">23:00</div>
<div style="position:absolute;left:1535.6px;top:465px;width:1.2px;height:4.5px;background:#000"></div>
<div style="position:absolute;top:466.8px;line-height:20px;font-size:10.2px;color:#1a1a1a;white-space:pre;transform-origin:0 50%;left:1537.20px;transform:scaleX(0.9817);">27</div>
<div style="position:absolute;top:466.8px;line-height:20px;font-size:10.2px;color:#1a1a1a;white-space:pre;transform-origin:0 50%;left:1551.53px;transform:scaleX(0.9363);">Dec</div>
<div style="position:absolute;top:466.8px;line-height:20px;font-size:10.2px;color:#1a1a1a;white-space:pre;transform-origin:0 50%;left:1571.71px;transform:scaleX(1.0142);">09:00</div>
<div style="position:absolute;left:1607.6px;top:465px;width:1.2px;height:4.5px;background:#000"></div>
<div style="position:absolute;top:466.8px;line-height:20px;font-size:10.2px;color:#1a1a1a;white-space:pre;transform-origin:0 50%;left:1609.20px;transform:scaleX(0.9817);">27</div>
<div style="position:absolute;top:466.8px;line-height:20px;font-size:10.2px;color:#1a1a1a;white-space:pre;transform-origin:0 50%;left:1623.53px;transform:scaleX(0.9363);">Dec</div>
<div style="position:absolute;top:466.8px;line-height:20px;font-size:10.2px;color:#1a1a1a;white-space:pre;transform-origin:0 50%;left:1643.71px;transform:scaleX(1.0142);">17:00</div>
<div style="position:absolute;left:1679.6px;top:465px;width:1.2px;height:4.5px;background:#000"></div>
<div style="position:absolute;top:466.8px;line-height:20px;font-size:10.2px;color:#1a1a1a;white-space:pre;transform-origin:0 50%;left:1681.20px;transform:scaleX(0.9817);">30</div>
<div style="position:absolute;top:466.8px;line-height:20px;font-size:10.2px;color:#1a1a1a;white-space:pre;transform-origin:0 50%;left:1695.53px;transform:scaleX(0.9363);">Dec</div>
<div style="position:absolute;top:466.8px;line-height:20px;font-size:10.2px;color:#1a1a1a;white-space:pre;transform-origin:0 50%;left:1715.71px;transform:scaleX(1.0142);">04:00</div>
<div style="position:absolute;left:1751.6px;top:465px;width:1.2px;height:4.5px;background:#000"></div>
<div style="position:absolute;top:466.8px;line-height:20px;font-size:10.2px;color:#1a1a1a;white-space:pre;transform-origin:0 50%;left:1753.20px;transform:scaleX(0.9817);">30</div>
<div style="position:absolute;top:466.8px;line-height:20px;font-size:10.2px;color:#1a1a1a;white-space:pre;transform-origin:0 50%;left:1767.53px;transform:scaleX(0.9363);">Dec</div>
<div style="position:absolute;top:466.8px;line-height:20px;font-size:10.2px;color:#1a1a1a;white-space:pre;transform-origin:0 50%;left:1787.71px;transform:scaleX(1.0142);">12:00</div>
<svg style="left:0;top:0" width="1891" height="782"><defs><clipPath id="cc"><rect x="1247" y="79" width="590" height="386"/></clipPath></defs><g clip-path="url(#cc)"><g stroke="#000" stroke-width="1.4"><path d="M1248.2 291.2V301.3"/><rect x="1245.6" y="292.6" width="5.2" height="7.5" fill="#000" stroke="none"/><path d="M1257.2 284.2V300.7"/><rect x="1255.1" y="291.7" width="4.2" height="7.4" fill="#fff" stroke-width="1.1"/><path d="M1266.2 288.3V314.7"/><rect x="1263.6" y="291.2" width="5.2" height="23.5" fill="#000" stroke="none"/><path d="M1275.2 294.0V320.5"/><rect x="1272.6" y="294.0" width="5.2" height="10.4" fill="#000" stroke="none"/><path d="M1284.2 294.3V314.1"/><rect x="1282.1" y="298.0" width="4.2" height="6.3" fill="#fff" stroke-width="1.1"/><path d="M1293.2 294.0V302.5"/><rect x="1290.6" y="294.0" width="5.2" height="1.6" fill="#000" stroke="none"/><path d="M1302.2 294.0V304.2"/><rect x="1299.6" y="295.5" width="5.2" height="6.2" fill="#000" stroke="none"/><path d="M1311.2 298.4V304.2"/><rect x="1308.6" y="300.2" width="5.2" height="1.3" fill="#000" stroke="none"/><path d="M1320.2 293.2V300.5"/><rect x="1318.1" y="296.0" width="4.2" height="4.0" fill="#fff" stroke-width="1.1"/><path d="M1329.2 294.0V300.5"/><rect x="1326.6" y="295.8" width="5.2" height="4.7" fill="#000" stroke="none"/><path d="M1338.2 298.2V318.8"/><rect x="1335.6" y="301.0" width="5.2" height="13.7" fill="#000" stroke="none"/><path d="M1347.2 313.5V337.7"/><rect x="1344.6" y="314.5" width="5.2" height="2.7" fill="#000" stroke="none"/><path d="M1356.2 303.0V317.6"/><rect x="1354.1" y="314.3" width="4.2" height="1.5" fill="#fff" stroke-width="1.1"/><path d="M1365.2 301.3V314.1"/><rect x="1362.6" y="312.6" width="5.2" height="1.5" fill="#000" stroke="none"/><path d="M1374.2 307.5V323.4"/><rect x="1371.6" y="312.1" width="5.2" height="10.1" fill="#000" stroke="none"/><path d="M1383.2 305.6V320.5"/><rect x="1381.1" y="306.8" width="4.2" height="13.2" fill="#fff" stroke-width="1.1"/><path d="M1392.2 305.6V329.6"/><rect x="1389.6" y="305.6" width="5.2" height="21.3" fill="#000" stroke="none"/><path d="M1401.2 304.4V328.9"/><rect x="1399.1" y="309.9" width="4.2" height="16.5" fill="#fff" stroke-width="1.1"/><path d="M1410.2 306.3V335.6"/><rect x="1407.6" y="309.1" width="5.2" height="23.0" fill="#000" stroke="none"/><path d="M1419.2 311.2V333.1"/><rect x="1417.1" y="312.6" width="4.2" height="20.0" fill="#fff" stroke-width="1.1"/><path d="M1428.2 305.6V315.6"/><rect x="1426.1" y="308.2" width="4.2" height="2.5" fill="#fff" stroke-width="1.1"/><path d="M1437.2 305.4V313.3"/><rect x="1434.6" y="307.2" width="5.2" height="1.4" fill="#000" stroke="none"/><path d="M1446.2 304.8V310.3"/><rect x="1443.6" y="307.1" width="5.2" height="3.2" fill="#000" stroke="none"/><path d="M1455.2 301.3V324.6"/><rect x="1453.1" y="303.8" width="4.2" height="6.0" fill="#fff" stroke-width="1.1"/><path d="M1464.2 298.4V311.2"/><rect x="1461.6" y="304.9" width="5.2" height="1.5" fill="#000" stroke="none"/><path d="M1473.2 277.5V300.5"/><rect x="1470.6" y="277.5" width="5.2" height="20.3" fill="#000" stroke="none"/><path d="M1482.2 294.0V304.8"/><rect x="1479.6" y="297.3" width="5.2" height="2.2" fill="#000" stroke="none"/><path d="M1491.2 296.6V301.6"/><rect x="1488.6" y="296.6" width="5.2" height="4.1" fill="#000" stroke="none"/><path d="M1500.2 294.0V301.5"/><rect x="1498.1" y="299.5" width="4.2" height="1.5" fill="#fff" stroke-width="1.1"/><path d="M1509.2 296.3V306.8"/><rect x="1506.6" y="298.2" width="5.2" height="7.8" fill="#000" stroke="none"/><path d="M1518.2 302.5V306.5"/><rect x="1516.1" y="303.0" width="4.2" height="3.0" fill="#fff" stroke-width="1.1"/><path d="M1527.2 303.0V313.3"/><rect x="1524.6" y="303.0" width="5.2" height="8.4" fill="#000" stroke="none"/><path d="M1536.2 311.2V322.8"/><rect x="1533.6" y="312.1" width="5.2" height="10.7" fill="#000" stroke="none"/><path d="M1545.2 311.4V339.7"/><rect x="1543.1" y="311.9" width="4.2" height="10.4" fill="#fff" stroke-width="1.1"/><path d="M1554.2 293.2V313.3"/><rect x="1552.1" y="296.0" width="4.2" height="14.1" fill="#fff" stroke-width="1.1"/><path d="M1563.2 289.3V309.8"/><rect x="1561.1" y="294.0" width="4.2" height="1.5" fill="#fff" stroke-width="1.1"/><path d="M1572.2 291.2V301.7"/><rect x="1569.6" y="293.0" width="5.2" height="1.2" fill="#000" stroke="none"/><path d="M1581.2 279.5V292.3"/><rect x="1579.1" y="280.0" width="4.2" height="11.8" fill="#fff" stroke-width="1.1"/><path d="M1590.2 279.5V297.5"/><rect x="1587.6" y="279.5" width="5.2" height="18.0" fill="#000" stroke="none"/><path d="M1599.2 274.2V300.5"/><rect x="1597.1" y="278.9" width="4.2" height="21.1" fill="#fff" stroke-width="1.1"/><path d="M1608.2 275.7V306.8"/><rect x="1605.6" y="277.5" width="5.2" height="4.0" fill="#000" stroke="none"/><path d="M1617.2 271.3V294.9"/><rect x="1614.6" y="282.3" width="5.2" height="8.5" fill="#000" stroke="none"/><path d="M1626.2 286.8V296.1"/><rect x="1624.1" y="289.4" width="4.2" height="1.7" fill="#fff" stroke-width="1.1"/><path d="M1635.2 274.2V288.5"/><rect x="1633.1" y="275.4" width="4.2" height="12.6" fill="#fff" stroke-width="1.1"/><path d="M1644.2 273.2V281.6"/><rect x="1641.6" y="275.2" width="5.2" height="1.2" fill="#000" stroke="none"/><path d="M1653.2 275.1V290.5"/><rect x="1650.6" y="275.1" width="5.2" height="4.7" fill="#000" stroke="none"/><path d="M1662.2 275.0V286.6"/><rect x="1660.1" y="276.4" width="4.2" height="9.7" fill="#fff" stroke-width="1.1"/><path d="M1671.2 265.7V278.0"/><rect x="1669.1" y="268.9" width="4.2" height="7.5" fill="#fff" stroke-width="1.1"/><path d="M1680.2 268.7V277.7"/><rect x="1677.6" y="268.7" width="5.2" height="5.5" fill="#000" stroke="none"/><path d="M1689.2 273.8V281.5"/><rect x="1686.6" y="274.8" width="5.2" height="4.9" fill="#000" stroke="none"/><path d="M1698.2 277.1V281.5"/><rect x="1695.6" y="278.0" width="5.2" height="1.2" fill="#000" stroke="none"/><path d="M1707.2 275.9V286.6"/><rect x="1704.6" y="279.4" width="5.2" height="4.1" fill="#000" stroke="none"/><path d="M1716.2 279.4V292.5"/><rect x="1713.6" y="284.1" width="5.2" height="8.4" fill="#000" stroke="none"/><path d="M1725.2 289.3V301.5"/><rect x="1722.6" y="291.7" width="5.2" height="1.4" fill="#000" stroke="none"/><path d="M1734.2 287.6V306.8"/><rect x="1731.6" y="291.7" width="5.2" height="1.4" fill="#000" stroke="none"/><path d="M1743.2 279.4V293.4"/><rect x="1741.1" y="288.3" width="4.2" height="3.0" fill="#fff" stroke-width="1.1"/><path d="M1752.2 278.3V291.6"/><rect x="1749.6" y="287.6" width="5.2" height="1.7" fill="#000" stroke="none"/><path d="M1761.2 277.3V288.2"/><rect x="1759.1" y="278.8" width="4.2" height="8.9" fill="#fff" stroke-width="1.1"/><path d="M1770.2 277.1V309.5"/><rect x="1767.6" y="278.3" width="5.2" height="23.8" fill="#000" stroke="none"/><path d="M1779.2 298.3V333.9"/><rect x="1776.6" y="305.0" width="5.2" height="26.2" fill="#000" stroke="none"/><path d="M1788.2 321.1V330.9"/><rect x="1786.1" y="324.1" width="4.2" height="6.3" fill="#fff" stroke-width="1.1"/></g></g></svg>
<div style="position:absolute;top:492.5px;line-height:20px;font-size:12.5px;color:#000;white-space:pre;transform-origin:0 50%;left:1879.00px;transform:scaleX(1.0069);">»</div>
<div style="position:absolute;left:2px;top:519px;width:1889px;height:238px;background:#fff;border-left:1px solid #404040;border-top:1px solid #707070"></div>
<div style="position:absolute;left:3px;top:520px;width:1888px;height:26.8px;background:#fafafa"></div>
<div style="position:absolute;left:174px;top:520px;width:1px;height:26.8px;background:#e9e9e9"></div>
<div style="position:absolute;left:346px;top:520px;width:1px;height:26.8px;background:#e9e9e9"></div>
<div style="position:absolute;left:1375px;top:520px;width:1px;height:26.8px;background:#e9e9e9"></div>
<div style="position:absolute;left:1547.5px;top:520px;width:1px;height:26.8px;background:#e9e9e9"></div>
<div style="position:absolute;left:1719.5px;top:520px;width:1px;height:26.8px;background:#e9e9e9"></div>
<div style="position:absolute;top:523.0px;line-height:20px;font-size:12.5px;color:#000;white-space:pre;transform-origin:0 50%;left:9.00px;transform:scaleX(0.9650);">Order</div>
<div style="position:absolute;top:523.0px;line-height:20px;font-size:12.5px;color:#000;white-space:pre;transform-origin:0 50%;left:312.20px;transform:scaleX(0.9812);">Time</div>
<div style="position:absolute;top:523.0px;line-height:20px;font-size:12.5px;color:#000;white-space:pre;transform-origin:0 50%;left:1342.64px;transform:scaleX(0.9407);">T</div>
<div style="position:absolute;top:523.0px;line-height:20px;font-size:12.5px;color:#000;white-space:pre;transform-origin:0 50%;left:1354.29px;transform:scaleX(1.0000);">/</div>
<div style="position:absolute;top:523.0px;line-height:20px;font-size:12.5px;color:#000;white-space:pre;transform-origin:0 50%;left:1362.22px;transform:scaleX(0.8128);">P</div>
<div style="position:absolute;top:523.0px;line-height:20px;font-size:12.5px;color:#000;white-space:pre;transform-origin:0 50%;left:1513.84px;transform:scaleX(0.9186);">Price</div>
<div style="position:absolute;top:523.0px;line-height:20px;font-size:12.5px;color:#000;white-space:pre;transform-origin:0 50%;left:1682.76px;transform:scaleX(0.9350);">Swap</div>
<div style="position:absolute;top:523.0px;line-height:20px;font-size:12.5px;color:#000;white-space:pre;transform-origin:0 50%;left:1855.28px;transform:scaleX(0.9844);">Profit</div>
<div style="position:absolute;left:3px;top:546.8px;width:1888px;height:23.8px;background:#c8c8c8"></div>
<div style="position:absolute;left:1719.5px;top:546.8px;width:1px;height:23.8px;background:#e4e4e4"></div>
<div style="position:absolute;left:9px;top:554px;width:8px;height:8px;border-radius:50%;background:radial-gradient(circle at 35% 30%,#ffffff,#b0b0b0 60%,#888 100%)"></div>
<div style="position:absolute;top:548.8px;line-height:20px;font-size:12.5px;color:#000;white-space:pre;transform-origin:0 50%;font-weight:bold;left:25.00px;transform:scaleX(1.0096);">Balance:</div>
<div style="position:absolute;top:548.8px;line-height:20px;font-size:12.5px;color:#000;white-space:pre;transform-origin:0 50%;font-weight:bold;left:81.98px;transform:scaleX(1.0968);">49</div>
<div style="position:absolute;top:548.8px;line-height:20px;font-size:12.5px;color:#000;white-space:pre;transform-origin:0 50%;font-weight:bold;left:101.60px;transform:scaleX(1.1079);">996.32</div>
<div style="position:absolute;top:548.8px;line-height:20px;font-size:12.5px;color:#000;white-space:pre;transform-origin:0 50%;font-weight:bold;left:148.33px;transform:scaleX(0.9726);">EUR</div>
<div style="position:absolute;top:548.8px;line-height:20px;font-size:12.5px;color:#000;white-space:pre;transform-origin:0 50%;font-weight:bold;left:181.00px;transform:scaleX(1.0227);">Equity:</div>
<div style="position:absolute;top:548.8px;line-height:20px;font-size:12.5px;color:#000;white-space:pre;transform-origin:0 50%;font-weight:bold;left:228.72px;transform:scaleX(1.1022);">49</div>
<div style="position:absolute;top:548.8px;line-height:20px;font-size:12.5px;color:#000;white-space:pre;transform-origin:0 50%;font-weight:bold;left:248.43px;transform:scaleX(1.1133);">996.32</div>
<div style="position:absolute;top:548.8px;line-height:20px;font-size:12.5px;color:#000;white-space:pre;transform-origin:0 50%;font-weight:bold;left:298.00px;transform:scaleX(1.0209);">Free</div>
<div style="position:absolute;top:548.8px;line-height:20px;font-size:12.5px;color:#000;white-space:pre;transform-origin:0 50%;font-weight:bold;left:329.32px;transform:scaleX(1.0402);">margin:</div>
<div style="position:absolute;top:548.8px;line-height:20px;font-size:12.5px;color:#000;white-space:pre;transform-origin:0 50%;font-weight:bold;left:1857.00px;transform:scaleX(1.1098);">0.00</div>
<div style="position:absolute;left:2px;top:756px;width:1889px;height:1.3px;background:#000"></div>
<div style="position:absolute;left:5px;top:756px;width:55px;height:21.5px;background:#fff;border:1px solid #000;border-top:none;box-shadow:1.5px 1.5px 0 #a0a0a0"></div>
<div style="position:absolute;left:6px;top:755px;width:53px;height:3px;background:#fff"></div>
<div style="position:absolute;top:757.0px;line-height:20px;font-size:12.5px;color:#000;white-space:pre;transform-origin:0 50%;left:18.00px;transform:scaleX(0.9102);">Trade</div>
<div style="position:absolute;top:757.5px;line-height:20px;font-size:12.5px;color:#585858;white-space:pre;transform-origin:0 50%;left:73.00px;transform:scaleX(0.9756);">History</div>
<div style="position:absolute;left:123px;top:760px;width:1px;height:16px;background:#707070"></div>
<div style="position:absolute;top:757.5px;line-height:20px;font-size:12.5px;color:#585858;white-space:pre;transform-origin:0 50%;left:137.00px;transform:scaleX(0.9570);">Journal</div>
<div style="position:absolute;left:1367px;top:762px;width:1px;height:19px;background:#a0a0a0"></div>
<div style="position:absolute;left:1487.4px;top:762px;width:1px;height:19px;background:#a0a0a0"></div>
<div style="position:absolute;left:1568.3px;top:762px;width:1px;height:19px;background:#a0a0a0"></div>
<div style="position:absolute;left:1649.3px;top:762px;width:1px;height:19px;background:#a0a0a0"></div>
<div style="position:absolute;left:1730.2px;top:762px;width:1px;height:19px;background:#a0a0a0"></div>
<div style="position:absolute;left:1811.2px;top:762px;width:1px;height:19px;background:#a0a0a0"></div>
<div style="position:absolute;left:378px;top:75px;width:869.3px;height:497.6px;background:#999999;border:1px solid #6e6e6e;border-bottom-color:#707070;box-shadow:1px 1px 3px rgba(0,0,0,0.28)"></div>
<div style="position:absolute;top:83.0px;line-height:20px;font-size:17px;color:#111;white-space:pre;transform-origin:0 50%;left:791.44px;transform:scaleX(0.9692);">Order</div>
<div style="position:absolute;left:1188px;top:77px;width:51px;height:22px;background:#c75050"></div>
<svg style="left:1210px;top:82.3px" width="8" height="8" viewBox="0 0 8 8"><path d="M0.6 0.6L7.6 7.6M7.6 0.6L0.6 7.6" stroke="#fff" stroke-width="1.4"/></svg>
<div style="position:absolute;left:386.5px;top:109.7px;width:851.6px;height:454.3px;background:#f0f0f0"></div>
<div style="position:absolute;left:398px;top:122px;width:328.5px;height:430px;background:#fff;border:1px solid #e2e2e2"></div>
<svg style="left:0;top:0" width="1891" height="782"><g stroke="#bdbdbd" stroke-width="1.2" stroke-dasharray="3 3.6" fill="none"><path d="M439.3 127.5V547"/><path d="M475.4 127.5V547"/><path d="M511.5 127.5V547"/><path d="M547.6 127.5V547"/><path d="M583.7 127.5V547"/><path d="M619.8 127.5V547"/><path d="M655.9 127.5V547"/><path d="M404 151.1H672"/><path d="M404 187.1H672"/><path d="M404 223.2H672"/><path d="M404 259.2H672"/><path d="M404 295.3H672"/><path d="M404 331.4H672"/><path d="M404 367.4H672"/><path d="M404 403.4H672"/><path d="M404 439.5H672"/><path d="M404 475.5H672"/><path d="M404 511.6H672"/></g><polyline points="404.0,302.6 407.8,329.6 411.2,273.9 414.8,329.6 421.4,271.2 431.3,361.5 434.9,327.5 438.3,361.5 441.6,327.5 444.8,361.5 448.3,327.5 451.9,361.5 458.5,299.0 465.3,361.5 468.5,327.5 471.8,361.5 475.5,327.5 478.7,361.5 485.5,299.0 498.6,417.6 502.5,382.0 505.8,328.0 519.2,218.0 522.4,161.3 529.1,217.7 532.5,161.3 536.1,189.4 539.7,245.0 543.1,280.0 546.5,299.8 549.5,358.0 559.6,272.7 562.7,305.0 566.3,272.7 569.5,305.0 573.0,272.7 576.4,330.0 579.8,272.7 583.5,305.0 586.5,272.7 593.4,442.9 596.3,386.6 600.3,356.1 603.3,389.7 610.3,330.6 672.5,330.6" fill="none" stroke="#ff5f5f" stroke-width="1.1" stroke-linejoin="round"/><polyline points="404.0,370.3 407.8,397.3 411.2,341.6 414.8,397.3 421.4,338.9 431.3,429.2 434.9,395.2 438.3,429.2 441.6,395.2 444.8,429.2 448.3,395.2 451.9,429.2 458.5,366.7 465.3,429.2 468.5,395.2 471.8,429.2 475.5,395.2 478.7,429.2 485.5,366.7 498.6,485.3 502.5,449.7 505.8,395.7 519.2,285.7 522.4,229.0 529.1,285.4 532.5,229.0 536.1,257.1 539.7,312.7 543.1,347.7 546.5,367.5 549.5,425.7 559.6,340.4 562.7,372.7 566.3,340.4 569.5,372.7 573.0,340.4 576.4,397.7 579.8,340.4 583.5,372.7 586.5,340.4 593.4,510.6 596.3,454.3 600.3,423.8 603.3,457.4 610.3,398.3 672.5,398.3" fill="none" stroke="#0a64ff" stroke-width="1.45" stroke-linejoin="round"/><rect x="403.6" y="126.6" width="269" height="420.4" fill="none" stroke="#000" stroke-width="1.3"/><path d="M671 151.1H675.4" stroke="#000" stroke-width="1.1"/><path d="M671 187.1H675.4" stroke="#000" stroke-width="1.1"/><path d="M671 223.2H675.4" stroke="#000" stroke-width="1.1"/><path d="M671 259.2H675.4" stroke="#000" stroke-width="1.1"/><path d="M671 295.3H675.4" stroke="#000" stroke-width="1.1"/><path d="M671 331.4H675.4" stroke="#000" stroke-width="1.1"/><path d="M671 367.4H675.4" stroke="#000" stroke-width="1.1"/><path d="M671 403.4H675.4" stroke="#000" stroke-width="1.1"/><path d="M671 439.5H675.4" stroke="#000" stroke-width="1.1"/><path d="M671 475.5H675.4" stroke="#000" stroke-width="1.1"/><path d="M671 511.6H675.4" stroke="#000" stroke-width="1.1"/></svg>
<div style="position:absolute;top:141.9px;line-height:20px;font-size:10.2px;color:#000;white-space:pre;transform-origin:0 50%;left:677.00px;transform:scaleX(0.9708);-webkit-text-stroke:0.25px #000;">19845.80</div>
<div style="position:absolute;top:177.95px;line-height:20px;font-size:10.2px;color:#000;white-space:pre;transform-origin:0 50%;left:677.00px;transform:scaleX(0.9708);-webkit-text-stroke:0.25px #000;">19845.16</div>
<div style="position:absolute;top:214.0px;line-height:20px;font-size:10.2px;color:#000;white-space:pre;transform-origin:0 50%;left:677.00px;transform:scaleX(0.9708);-webkit-text-stroke:0.25px #000;">19844.52</div>
<div style="position:absolute;top:250.05px;line-height:20px;font-size:10.2px;color:#000;white-space:pre;transform-origin:0 50%;left:677.00px;transform:scaleX(0.9708);-webkit-text-stroke:0.25px #000;">19843.89</div>
<div style="position:absolute;top:286.09999999999997px;line-height:20px;font-size:10.2px;color:#000;white-space:pre;transform-origin:0 50%;left:677.00px;transform:scaleX(0.9708);-webkit-text-stroke:0.25px #000;">19843.25</div>
<div style="position:absolute;top:322.15000000000003px;line-height:20px;font-size:10.2px;color:#000;white-space:pre;transform-origin:0 50%;left:677.00px;transform:scaleX(0.9708);-webkit-text-stroke:0.25px #000;">19842.61</div>
<div style="position:absolute;top:358.2px;line-height:20px;font-size:10.2px;color:#000;white-space:pre;transform-origin:0 50%;left:677.00px;transform:scaleX(0.9708);-webkit-text-stroke:0.25px #000;">19841.97</div>
<div style="position:absolute;top:394.24999999999994px;line-height:20px;font-size:10.2px;color:#000;white-space:pre;transform-origin:0 50%;left:677.00px;transform:scaleX(0.9708);-webkit-text-stroke:0.25px #000;">19841.33</div>
<div style="position:absolute;top:430.3px;line-height:20px;font-size:10.2px;color:#000;white-space:pre;transform-origin:0 50%;left:677.00px;transform:scaleX(0.9708);-webkit-text-stroke:0.25px #000;">19840.69</div>
<div style="position:absolute;top:466.34999999999997px;line-height:20px;font-size:10.2px;color:#000;white-space:pre;transform-origin:0 50%;left:677.00px;transform:scaleX(0.9708);-webkit-text-stroke:0.25px #000;">19840.06</div>
<div style="position:absolute;top:502.40000000000003px;line-height:20px;font-size:10.2px;color:#000;white-space:pre;transform-origin:0 50%;left:677.00px;transform:scaleX(0.9708);-webkit-text-stroke:0.25px #000;">19839.42</div>
<div style="position:absolute;left:674.6px;top:322px;width:48.6px;height:14.6px;background:#ff6262"></div>
<div style="position:absolute;top:319.8px;line-height:20px;font-size:10.2px;color:#fff;white-space:pre;transform-origin:0 50%;font-weight:bold;left:678.40px;transform:scaleX(0.9590);">19842.60</div>
<div style="position:absolute;left:674.6px;top:390px;width:48.6px;height:14.6px;background:#0a64ff"></div>
<div style="position:absolute;top:387.8px;line-height:20px;font-size:10.2px;color:#fff;white-space:pre;transform-origin:0 50%;font-weight:bold;left:678.40px;transform:scaleX(0.9590);">19841.40</div>
<div style="position:absolute;top:139.0px;line-height:20px;font-size:12.5px;color:#000;white-space:pre;transform-origin:0 50%;left:796.04px;transform:scaleX(0.9735);">Symbol:</div>
<div style="position:absolute;top:173.0px;line-height:20px;font-size:12.5px;color:#000;white-space:pre;transform-origin:0 50%;left:795.14px;transform:scaleX(0.9931);">Volume:</div>
<div style="position:absolute;top:206.8px;line-height:20px;font-size:12.5px;color:#000;white-space:pre;transform-origin:0 50%;left:783.58px;transform:scaleX(0.9504);">Stop</div>
<div style="position:absolute;top:206.8px;line-height:20px;font-size:12.5px;color:#000;white-space:pre;transform-origin:0 50%;left:811.87px;transform:scaleX(0.9415);">Loss:</div>
<div style="position:absolute;top:206.8px;line-height:20px;font-size:12.5px;color:#000;white-space:pre;transform-origin:0 50%;left:1028.84px;transform:scaleX(0.9936);">Take</div>
<div style="position:absolute;top:206.8px;line-height:20px;font-size:12.5px;color:#000;white-space:pre;transform-origin:0 50%;left:1058.93px;transform:scaleX(1.0131);">Profit:</div>
<div style="position:absolute;top:240.3px;line-height:20px;font-size:12.5px;color:#000;white-space:pre;transform-origin:0 50%;left:783.47px;transform:scaleX(0.9805);">Comment:</div>
<div style="position:absolute;top:274.0px;line-height:20px;font-size:12.5px;color:#000;white-space:pre;transform-origin:0 50%;left:809.07px;transform:scaleX(1.0118);">Type:</div>
<div style="position:absolute;left:848px;top:135px;width:364px;height:26.5px;background:#fff;border:1px solid #7a7a7a;border-radius:2px"></div>
<div style="position:absolute;top:138.8px;line-height:20px;font-size:12.5px;color:#000;white-space:pre;transform-origin:0 50%;left:853.50px;transform:scaleX(0.8942);">GERMANY40,</div>
<div style="position:absolute;top:138.8px;line-height:20px;font-size:12.5px;color:#000;white-space:pre;transform-origin:0 50%;left:929.40px;transform:scaleX(0.9509);">Germany</div>
<div style="position:absolute;top:138.8px;line-height:20px;font-size:12.5px;color:#000;white-space:pre;transform-origin:0 50%;left:982.13px;transform:scaleX(0.9660);">40</div>
<div style="position:absolute;top:138.8px;line-height:20px;font-size:12.5px;color:#000;white-space:pre;transform-origin:0 50%;left:999.41px;transform:scaleX(1.0076);">Index</div>
<div style="position:absolute;top:138.8px;line-height:20px;font-size:12.5px;color:#000;white-space:pre;transform-origin:0 50%;left:1034.08px;transform:scaleX(0.8870);">CFD,</div>
<div style="position:absolute;top:138.8px;line-height:20px;font-size:12.5px;color:#000;white-space:pre;transform-origin:0 50%;left:1063.79px;transform:scaleX(0.9270);">cash</div>
<div style="position:absolute;top:138.8px;line-height:20px;font-size:12.5px;color:#000;white-space:pre;transform-origin:0 50%;left:1092.12px;transform:scaleX(0.9225);">(EUR)</div>
<svg style="left:1193px;top:144.5px" width="12" height="8" viewBox="0 0 12 8"><path d="M1.2 1.5L6 6.2L10.8 1.5" stroke="#000" stroke-width="1.9" fill="none"/></svg>
<div style="position:absolute;left:848px;top:270px;width:364px;height:26.5px;background:#fff;border:1px solid #7a7a7a;border-radius:2px"></div>
<div style="position:absolute;top:273.8px;line-height:20px;font-size:12.5px;color:#000;white-space:pre;transform-origin:0 50%;left:853.50px;transform:scaleX(0.9704);">Market</div>
<div style="position:absolute;top:273.8px;line-height:20px;font-size:12.5px;color:#000;white-space:pre;transform-origin:0 50%;left:894.42px;transform:scaleX(0.9556);">Execution</div>
<svg style="left:1193px;top:279.5px" width="12" height="8" viewBox="0 0 12 8"><path d="M1.2 1.5L6 6.2L10.8 1.5" stroke="#000" stroke-width="1.9" fill="none"/></svg>
<div style="position:absolute;left:848px;top:169.2px;width:113px;height:26.6px;background:#fff;border:1px solid #a6a9b0;border-radius:1px"></div>
<div style="position:absolute;top:173.0px;line-height:20px;font-size:12.5px;color:#000;white-space:pre;transform-origin:0 50%;left:853.00px;transform:scaleX(0.9813);">0.10</div>
<div style="position:absolute;left:936.2px;top:171.6px;width:22.6px;height:10.3px;background:linear-gradient(#f8f8f8,#dedede);border:1px solid #a2a2a2"></div>
<div style="position:absolute;left:936.2px;top:181.1px;width:22.6px;height:12.3px;background:linear-gradient(#f4f4f4,#dcdcdc);border:1px solid #a2a2a2"></div>
<svg style="left:943.8px;top:174.6px" width="6" height="3.4" viewBox="0 0 6 3.4"><path d="M0 3.2L3 0.2L6 3.2Z" fill="#222"/></svg>
<svg style="left:943.8px;top:186.0px" width="6" height="3.4" viewBox="0 0 6 3.4"><path d="M0 0.2L3 3.2L6 0.2Z" fill="#222"/></svg>
<div style="position:absolute;left:848px;top:203.3px;width:113px;height:26.6px;background:#fff;border:1px solid #a6a9b0;border-radius:1px"></div>
<div style="position:absolute;top:207.10000000000002px;line-height:20px;font-size:12.5px;color:#000;white-space:pre;transform-origin:0 50%;left:853.00px;transform:scaleX(0.9813);">0.00</div>
<div style="position:absolute;left:936.2px;top:205.70000000000002px;width:22.6px;height:10.3px;background:linear-gradient(#f8f8f8,#dedede);border:1px solid #a2a2a2"></div>
<div style="position:absolute;left:936.2px;top:215.20000000000002px;width:22.6px;height:12.3px;background:linear-gradient(#f4f4f4,#dcdcdc);border:1px solid #a2a2a2"></div>
<svg style="left:943.8px;top:208.70000000000002px" width="6" height="3.4" viewBox="0 0 6 3.4"><path d="M0 3.2L3 0.2L6 3.2Z" fill="#222"/></svg>
<svg style="left:943.8px;top:220.10000000000002px" width="6" height="3.4" viewBox="0 0 6 3.4"><path d="M0 0.2L3 3.2L6 0.2Z" fill="#222"/></svg>
<div style="position:absolute;left:1099.9px;top:203.3px;width:112px;height:26.6px;background:#fff;border:1px solid #a6a9b0;border-radius:1px"></div>
<div style="position:absolute;top:207.10000000000002px;line-height:20px;font-size:12.5px;color:#000;white-space:pre;transform-origin:0 50%;left:1104.90px;transform:scaleX(0.9813);">0.00</div>
<div style="position:absolute;left:1187.1000000000001px;top:205.70000000000002px;width:22.6px;height:10.3px;background:linear-gradient(#f8f8f8,#dedede);border:1px solid #a2a2a2"></div>
<div style="position:absolute;left:1187.1000000000001px;top:215.20000000000002px;width:22.6px;height:12.3px;background:linear-gradient(#f4f4f4,#dcdcdc);border:1px solid #a2a2a2"></div>
<svg style="left:1194.7px;top:208.70000000000002px" width="6" height="3.4" viewBox="0 0 6 3.4"><path d="M0 3.2L3 0.2L6 3.2Z" fill="#222"/></svg>
<svg style="left:1194.7px;top:220.10000000000002px" width="6" height="3.4" viewBox="0 0 6 3.4"><path d="M0 0.2L3 3.2L6 0.2Z" fill="#222"/></svg>
<div style="position:absolute;left:848px;top:236.7px;width:364px;height:26.2px;background:#fff;border:1px solid #c4c4c4;border-radius:1px"></div>
<div style="position:absolute;left:736.5px;top:315.5px;width:490.3px;height:237.3px;border:1px solid #dadada"></div>
<div style="position:absolute;left:746px;top:306px;width:102px;height:16px;background:#f0f0f0"></div>
<div style="position:absolute;top:304.1px;line-height:20px;font-size:12.5px;color:#000;white-space:pre;transform-origin:0 50%;left:750.00px;transform:scaleX(0.9704);">Market</div>
<div style="position:absolute;top:304.1px;line-height:20px;font-size:12.5px;color:#000;white-space:pre;transform-origin:0 50%;left:790.92px;transform:scaleX(0.9556);">Execution</div>
<div style="position:absolute;top:341.7px;line-height:20px;font-size:29px;color:#000;white-space:pre;transform-origin:0 50%;left:846.53px;transform:scaleX(0.9907);">19841.40</div>
<div style="position:absolute;top:341.7px;line-height:20px;font-size:29px;color:#000;white-space:pre;transform-origin:0 50%;left:976.97px;transform:scaleX(1.0000);">/</div>
<div style="position:absolute;top:341.7px;line-height:20px;font-size:29px;color:#000;white-space:pre;transform-origin:0 50%;left:995.64px;transform:scaleX(0.9907);">19842.60</div>
<div style="position:absolute;left:758px;top:385.2px;width:211px;height:26.6px;background:#ff8080;border:1px solid #b06868"></div>
<div style="position:absolute;top:388.3px;line-height:20px;font-size:12.5px;color:#000;white-space:pre;transform-origin:0 50%;left:825.17px;transform:scaleX(0.9093);">Sell</div>
<div style="position:absolute;top:388.3px;line-height:20px;font-size:12.5px;color:#000;white-space:pre;transform-origin:0 50%;left:847.98px;transform:scaleX(0.9792);">by</div>
<div style="position:absolute;top:388.3px;line-height:20px;font-size:12.5px;color:#000;white-space:pre;transform-origin:0 50%;left:864.75px;transform:scaleX(0.9704);">Market</div>
<div style="position:absolute;left:994px;top:385.2px;width:210px;height:26.6px;background:#a0c0ff;border:1px solid #7c92c4"></div>
<div style="position:absolute;top:388.3px;line-height:20px;font-size:12.5px;color:#000;white-space:pre;transform-origin:0 50%;left:1060.03px;transform:scaleX(0.9393);">Buy</div>
<div style="position:absolute;top:388.3px;line-height:20px;font-size:12.5px;color:#000;white-space:pre;transform-origin:0 50%;left:1084.12px;transform:scaleX(0.9792);">by</div>
<div style="position:absolute;top:388.3px;line-height:20px;font-size:12.5px;color:#000;white-space:pre;transform-origin:0 50%;left:1100.89px;transform:scaleX(0.9704);">Market</div>
<div style="position:absolute;left:758px;top:423.5px;width:446px;height:26px;border:1px solid #dadada"></div>
<div style="position:absolute;top:469.0px;line-height:20px;font-size:12.5px;color:#000;white-space:pre;transform-origin:0 50%;left:749.99px;transform:scaleX(1.0126);">Attention!</div>
<div style="position:absolute;top:469.0px;line-height:20px;font-size:12.5px;color:#000;white-space:pre;transform-origin:0 50%;left:807.32px;transform:scaleX(0.9525);">The</div>
<div style="position:absolute;top:469.0px;line-height:20px;font-size:12.5px;color:#000;white-space:pre;transform-origin:0 50%;left:831.68px;transform:scaleX(0.9920);">trade</div>
<div style="position:absolute;top:469.0px;line-height:20px;font-size:12.5px;color:#000;white-space:pre;transform-origin:0 50%;left:863.80px;transform:scaleX(1.0125);">will</div>
<div style="position:absolute;top:469.0px;line-height:20px;font-size:12.5px;color:#000;white-space:pre;transform-origin:0 50%;left:885.23px;transform:scaleX(0.9545);">be</div>
<div style="position:absolute;top:469.0px;line-height:20px;font-size:12.5px;color:#000;white-space:pre;transform-origin:0 50%;left:902.35px;transform:scaleX(0.9647);">executed</div>
<div style="position:absolute;top:469.0px;line-height:20px;font-size:12.5px;color:#000;white-space:pre;transform-origin:0 50%;left:955.14px;transform:scaleX(1.0135);">at</div>
<div style="position:absolute;top:469.0px;line-height:20px;font-size:12.5px;color:#000;white-space:pre;transform-origin:0 50%;left:969.55px;transform:scaleX(0.9926);">market</div>
<div style="position:absolute;top:469.0px;line-height:20px;font-size:12.5px;color:#000;white-space:pre;transform-origin:0 50%;left:1011.33px;transform:scaleX(0.9791);">conditions,</div>
<div style="position:absolute;top:469.0px;line-height:20px;font-size:12.5px;color:#000;white-space:pre;transform-origin:0 50%;left:1073.69px;transform:scaleX(0.9843);">difference</div>
<div style="position:absolute;top:469.0px;line-height:20px;font-size:12.5px;color:#000;white-space:pre;transform-origin:0 50%;left:1131.35px;transform:scaleX(1.0308);">with</div>
<div style="position:absolute;top:469.0px;line-height:20px;font-size:12.5px;color:#000;white-space:pre;transform-origin:0 50%;left:1158.11px;transform:scaleX(0.9694);">requested</div>
<div style="position:absolute;top:484.0px;line-height:20px;font-size:12.5px;color:#000;white-space:pre;transform-origin:0 50%;left:914.69px;transform:scaleX(0.9665);">price</div>
<div style="position:absolute;top:484.0px;line-height:20px;font-size:12.5px;color:#000;white-space:pre;transform-origin:0 50%;left:944.73px;transform:scaleX(0.9703);">may</div>
<div style="position:absolute;top:484.0px;line-height:20px;font-size:12.5px;color:#000;white-space:pre;transform-origin:0 50%;left:971.49px;transform:scaleX(0.9545);">be</div>
<div style="position:absolute;top:484.0px;line-height:20px;font-size:12.5px;color:#000;white-space:pre;transform-origin:0 50%;left:988.61px;transform:scaleX(0.9939);">significant!</div>
<svg style="left:0;top:0" width="400" height="300"><path d="M172.3 207.8L98.5 92.5" stroke="#e8141c" stroke-width="1.9" fill="none"/><path d="M91.4 79.4L105.3 89.2L93 97Z" fill="#e8141c"/></svg>
</div></body></html>
